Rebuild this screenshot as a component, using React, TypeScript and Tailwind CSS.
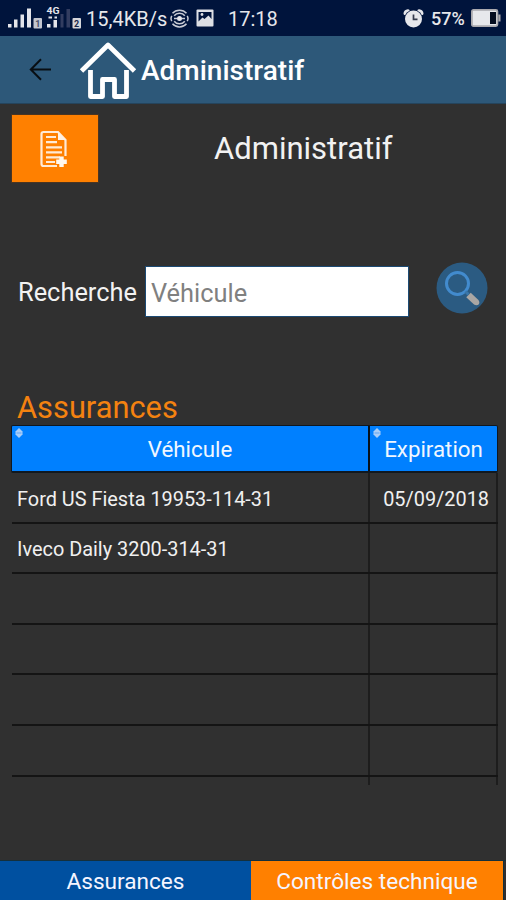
import { useState } from 'react';

const rows = [
  { vehicle: 'Ford US Fiesta 19953-114-31', expiration: '05/09/2018' },
  { vehicle: 'Iveco Daily 3200-314-31', expiration: '' },
  { vehicle: '', expiration: '' },
  { vehicle: '', expiration: '' },
  { vehicle: '', expiration: '' },
  { vehicle: '', expiration: '' },
];

function SignalIcons() {
  return (
    <svg className="h-9 w-[76px] shrink-0" viewBox="0 0 76 36" fill="#e4e5ea">
      <rect x="0" y="24" width="3.500" height="3.500" />
      <rect x="6" y="19.500" width="3.500" height="8" />
      <rect x="12.500" y="14.500" width="3.500" height="13" />
      <rect x="19" y="8.500" width="4" height="19" />
      <rect x="25.500" y="18" width="8.500" height="10.500" rx="1" fill="#c3c6cf" />
      <text x="27.200" y="26.500" fontSize="9" fontWeight="700" fill="#4b5269">1</text>
      <text x="38.500" y="13.500" fontSize="9" fontWeight="700" textLength="13" lengthAdjust="spacingAndGlyphs">4G</text>
      <rect x="39" y="24" width="3.500" height="3.500" />
      <rect x="45.500" y="20" width="3.500" height="7.500" />
      <rect x="40.500" y="16.500" width="3.500" height="2" />
      <rect x="46.500" y="16.500" width="2.500" height="2" />
      <rect x="52.500" y="14" width="3" height="13.500" fill="#323d60" />
      <rect x="58.500" y="9" width="3.500" height="18.500" fill="#323d60" />
      <rect x="64.500" y="18" width="8.500" height="10.500" rx="1" fill="#d5d6da" />
      <text x="66.100" y="26.700" fontSize="9" fontWeight="700" fill="#1b2648">2</text>
    </svg>
  );
}

function CastIcon() {
  return (
    <svg className="h-[19px] w-[19px] shrink-0" viewBox="0 0 19 19" fill="none" stroke="#c9ccd5" strokeWidth="1.500">
      <path d="M2.500 4.200C6 .1 13 .1 16.500 4.200M4.200 6.700c2.400-3.300 8.200-3.300 10.600 0M2.500 14.800c3.500 4.100 10.500 4.100 14 0M4.200 12.300c2.400 3.300 8.200 3.300 10.600 0" />
      <path d="M1.800 6.800c-1 1.700-1 3.700 0 5.400M17.200 6.800c1 1.700 1 3.700 0 5.400" />
      <circle cx="9.500" cy="9.500" r="2.500" fill="#e4e5ea" stroke="none" />
      <path d="M4 9.500h3M12 9.500h3" />
    </svg>
  );
}

function PictureIcon() {
  return (
    <svg className="h-[18px] w-[18px] shrink-0" viewBox="0 0 18 18">
      <rect x="0.500" y="0.500" width="17" height="17" rx="1" fill="#dddfe5" />
      <path d="M2.500 3h13v7l-3-3.500-4 3.500-2-1.500-4 4z" fill="#00143c" />
      <circle cx="6" cy="5.500" r="1.400" fill="#dddfe5" />
    </svg>
  );
}

function AlarmIcon() {
  return (
    <svg className="h-[19px] w-[21px] shrink-0" viewBox="0 0 21 19">
      <path d="M2.300 4.500Q2.500 2.300 5 2M18.700 4.500Q18.500 2.300 16 2" fill="none" stroke="#e6e7eb" strokeWidth="3.600" strokeLinecap="round" />
      <circle cx="10.500" cy="10" r="9.300" fill="#00143c" />
      <circle cx="10.500" cy="10" r="8.500" fill="#e6e7eb" />
      <path d="M10.500 5.500v4.800h4" fill="none" stroke="#343b4d" strokeWidth="1.700" />
    </svg>
  );
}

function BatteryIcon() {
  return (
    <svg className="h-[18px] w-[30px] shrink-0" viewBox="0 0 30 18">
      <rect x="0.900" y="0.900" width="25.500" height="16.200" rx="1.500" fill="#e7e8ec" stroke="#aaa9ae" strokeWidth="1.800" />
      <rect x="19" y="3" width="6" height="12" fill="#050d20" />
      <path d="M27.300 5.500h2.200v7h-2.200z" fill="#aaa9ae" />
    </svg>
  );
}

function StatusBar() {
  return (
    <div className="flex h-9 items-center bg-[#00143c] pl-2 text-[#e6e7eb]">
      <SignalIcons />
      <span className="ml-0.5 w-[84px] pt-0.5 text-[20px] whitespace-nowrap">15,4KB/s</span>
      <CastIcon />
      <span className="ml-[7px]"><PictureIcon /></span>
      <span className="ml-[14px] pt-0.5 text-[20px]">17:18</span>
      <div className="ml-auto flex items-center pr-[5px]">
        <AlarmIcon />
        <span className="ml-[7px] w-[40px] text-[18px] font-medium">57%</span>
        <BatteryIcon />
      </div>
    </div>
  );
}

function AppBar() {
  return (
    <header className="flex h-[68px] items-center border-b border-[#25445c] bg-[#2d5879] pl-[29px]">
      <button aria-label="Retour">
        <svg className="h-6 w-[23px]" viewBox="0 0 23 24" fill="none" stroke="#080e13" strokeWidth="2">
          <path d="M22 11.500H2M12 1.300 1.800 11.500 12 21.700" />
        </svg>
      </button>
      <svg className="ml-[27px] h-[60px] w-[58px]" viewBox="0 0 58 60" fill="none" stroke="#fff" strokeWidth="4.800" strokeLinejoin="round">
        <path d="M2.500 31 29 5l26.500 26" />
        <path d="M11.500 30v26.500h12V39.500h12v17h12V30" />
      </svg>
      <h1 className="ml-1 pt-[3px] text-[28px] font-medium text-white">Administratif</h1>
    </header>
  );
}

function NewDocumentIcon() {
  return (
    <svg className="-ml-[3px] h-[38px] w-7" viewBox="0 0 28 38" fill="none" stroke="#ffead6" strokeWidth="2.200">
      <path d="M17 36H3.500Q1.500 36 1.500 34V4q0-2 2-2H18l7.500 8v16" />
      <path d="M18 1.500V10h8z" fill="#fff0e2" stroke="none" />
      <path d="M6 7h10M6 12.200h11M6 17.300h16M6 22.300h16M6 27.300h14M6 32h9" />
      <path d="M21.500 26.500v10.500M16.200 31.700h10.600" stroke="#fff8ef" strokeWidth="4.400" />
    </svg>
  );
}

function SearchIcon() {
  return (
    <svg className="h-[52px] w-[52px]" viewBox="0 0 52 52" fill="none">
      <circle cx="26" cy="26" r="25.500" fill="#2b5b82" />
      <circle cx="21.500" cy="21.500" r="11" stroke="#428bce" strokeWidth="3" />
      <path d="m29.500 29.500 3 3" stroke="#3976a9" strokeWidth="3" />
      <path d="m32.500 33 8 7.500" stroke="#aaa7a4" strokeWidth="6.500" />
      <circle cx="40.500" cy="40.500" r="2.800" fill="#aaa7a4" />
    </svg>
  );
}

function SortIcon() {
  return (
    <svg className="absolute left-[3px] top-[2px] h-[10px] w-2" viewBox="0 0 8 10">
      <path d="M4 0 7.500 3.500v3L4 10 .5 6.500v-3z" fill="#a9cdf7" />
      <path d="M1.500 5h5" stroke="#5ea5f5" strokeWidth="1" />
    </svg>
  );
}

function InsuranceTable() {
  return (
    <div className="ml-[11px] flex h-[360px] w-[487px] flex-col overflow-hidden">
      <div className="flex h-[48px] shrink-0 rounded-[2px] border border-b-2 border-[#101820] bg-[#0080ff] text-[22.3px] text-[#f0f7ff]">
        <div className="relative flex w-[358px] items-center justify-center border-r-2 border-[#07121d] pt-[3px]">
          <SortIcon />
          Véhicule
        </div>
        <div className="relative flex flex-1 items-center justify-center pt-[3px]">
          <SortIcon />
          Expiration
        </div>
      </div>
      {rows.map((row, i) => (
        <div key={i} className="ml-px flex h-[50.6px] shrink-0 border-b-2 border-[#141414] text-[19.9px] text-[#f0f0f0]">
          <div className="flex w-[358px] items-center border-r-2 border-[#1d1d1d] pl-[5px] pt-[5px]">{row.vehicle}</div>
          <div className="flex flex-1 items-center justify-end border-r-2 border-[#1d1d1d] pr-[7px] pt-[5px]">{row.expiration}</div>
        </div>
      ))}
      <div className="ml-px flex flex-1">
        <div className="w-[358px] border-r-2 border-[#1d1d1d]" />
        <div className="flex-1 border-r-2 border-[#1d1d1d]" />
      </div>
    </div>
  );
}

export default function App() {
  const [query, setQuery] = useState('');

  return (
    <div className="flex h-[900px] w-[506px] flex-col overflow-hidden bg-[#303030] font-['Roboto',sans-serif]">
      <StatusBar />
      <AppBar />

      <div className="flex h-[88px] pl-[11px] pt-[10px]">
        <button aria-label="Ajouter" className="flex h-[69px] w-[88px] items-center justify-center border border-[#4a3522] bg-[#ff8000]">
          <NewDocumentIcon />
        </button>
        <h2 className="ml-[115px] h-[69px] text-[31px] leading-[69px] text-[#f2f2f2]">Administratif</h2>
      </div>

      <div className="mt-[72px] flex h-[54px] items-center pl-[18px]">
        <label htmlFor="search" className="w-[127px] pt-[3px] text-[25.4px] text-[#f2f2f2]">Recherche</label>
        <input
          id="search"
          value={query}
          onChange={(e) => setQuery(e.target.value)}
          placeholder="Véhicule"
          className="h-[51px] w-[264px] border border-[#1c4a73] bg-white pl-[5px] pt-[3px] text-[25.4px] text-[#333] placeholder:text-[#808080]"
        />
        <button aria-label="Rechercher" className="-mt-1.5 ml-[27px]">
          <SearchIcon />
        </button>
      </div>

      <h3 className="mt-[66px] h-[41px] pl-[17px] text-[30.8px] leading-[47px] text-[#f48210]">Assurances</h3>
      <InsuranceTable />

      <nav className="mt-auto flex h-10 border-t border-[#14303c] text-[22.6px] text-[#f5f5ff]">
        <button className="w-[251px] bg-[#0050a0] pt-0.5">Assurances</button>
        <button className="w-[252px] bg-[#ff8000] pt-0.5">Contrôles technique</button>
        <div className="flex-1 border-l border-[#14303c] bg-[#303030]" />
      </nav>
    </div>
  );
}
